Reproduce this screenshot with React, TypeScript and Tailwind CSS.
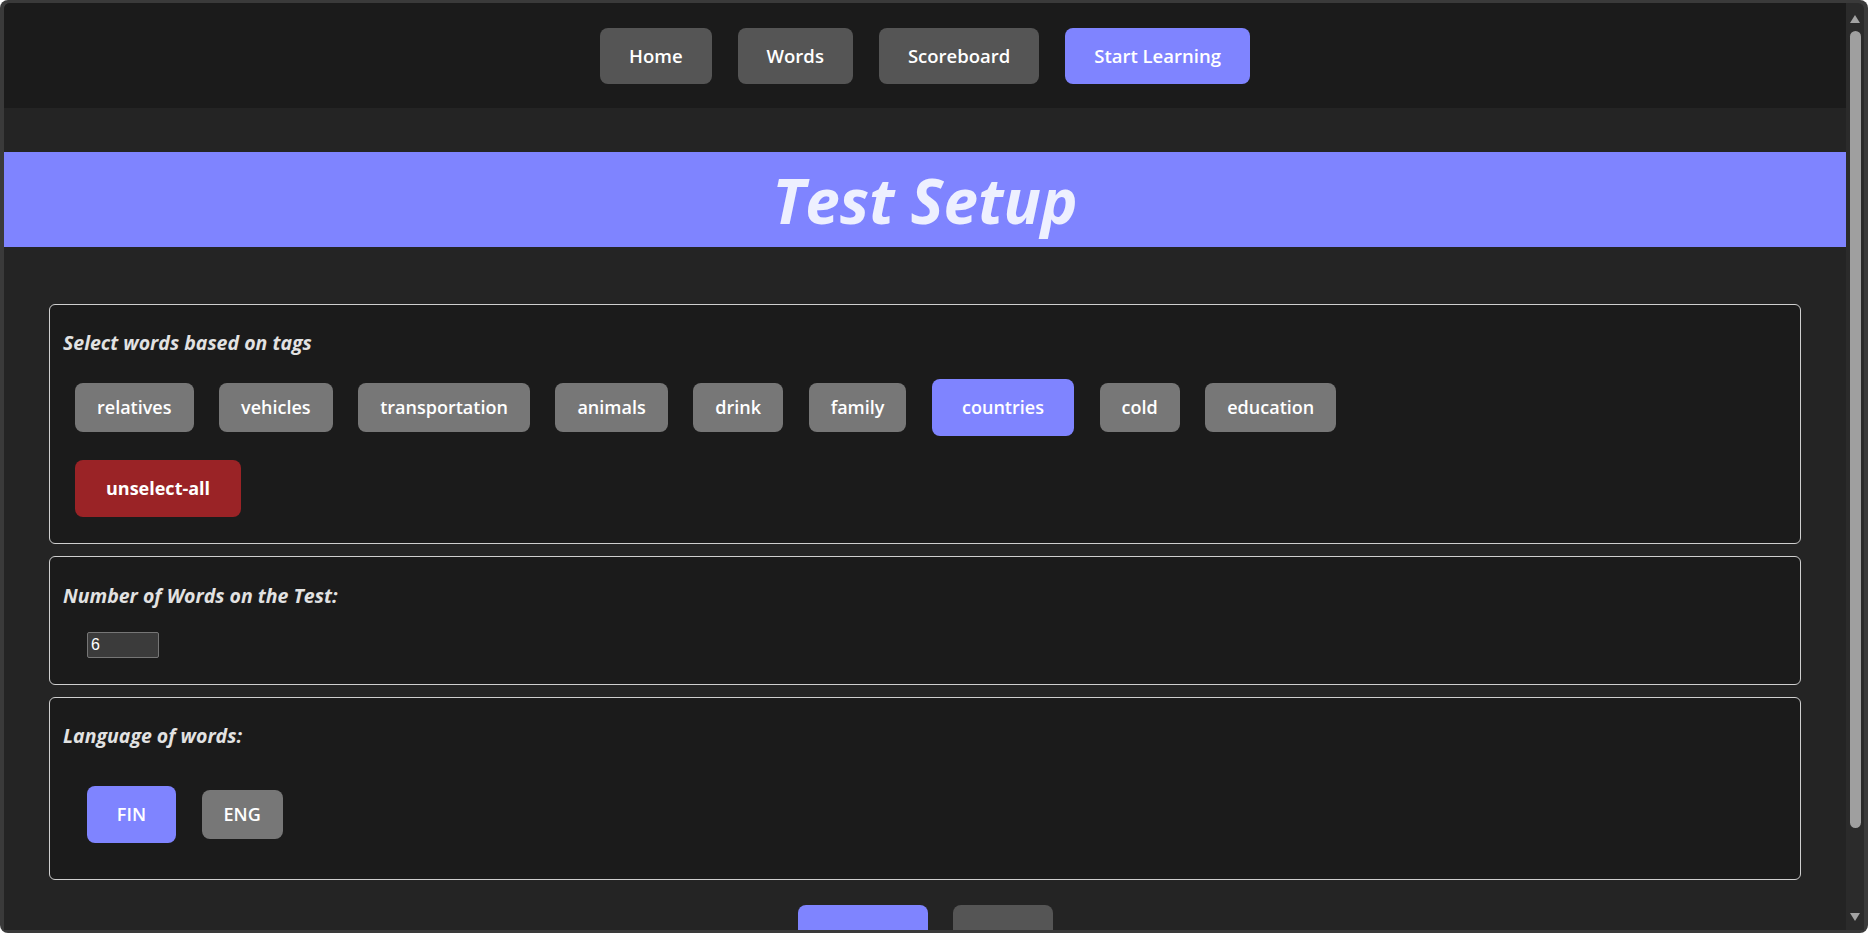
import React from 'react';

const font = "font-['Open_Sans',sans-serif]";

const navItems = [
  { label: 'Home' },
  { label: 'Words' },
  { label: 'Scoreboard' },
  { label: 'Start Learning', active: true },
];

const tags = [
  { name: 'relatives' },
  { name: 'vehicles' },
  { name: 'transportation' },
  { name: 'animals' },
  { name: 'drink' },
  { name: 'family' },
  { name: 'countries', selected: true },
  { name: 'cold' },
  { name: 'education' },
];

const TagButton: React.FC<any> = ({ label, selected, danger }) => (
  <button
    className={
      danger
        ? 'mx-[12.8px] my-3 h-[57px] px-[31px] rounded-lg text-[18px] font-bold text-white bg-[#9a2326]'
        : selected
          ? 'mx-[12.8px] my-3 h-[57px] px-[30px] rounded-lg text-[18px] font-semibold text-white bg-[#7f84ff]'
          : 'mx-[12.8px] my-3 h-[49px] px-[22px] rounded-lg text-[18px] font-semibold text-white bg-[#777777]'
    }
  >
    {label}
  </button>
);

const Label: React.FC<any> = ({ children }) => (
  <p className="text-[19.5px] leading-[24px] font-bold italic text-[#e2e2e2]">{children}</p>
);

export default function App() {
  return (
    <div className={`h-[933px] w-[1868px] bg-[#3a3a3a] rounded-[8px] pl-[4px] pr-[4px] pt-[3px] pb-[3px] overflow-hidden ${font}`}>
      <div className="flex h-full rounded-t-[6px] overflow-hidden">
        <main className="flex-1 h-full overflow-hidden bg-[#242424]">
          <nav className="h-[105px] bg-[#1b1b1b] flex items-center justify-center gap-[26px]">
            {navItems.map((n) => (
              <button
                key={n.label}
                className={`h-[56px] px-[29px] rounded-lg text-[18.5px] font-semibold text-white ${n.active ? 'bg-[#7f84ff]' : 'bg-[#555555]'}`}
              >
                {n.label}
              </button>
            ))}
          </nav>

          <header className="mt-[44px] h-[95px] bg-[#7f84ff] flex items-center justify-center">
            <h1 className="text-[62px] leading-none font-bold italic text-[#eef0ff]">Test Setup</h1>
          </header>

          <div className="mx-[45px] mt-[57px] flex flex-col gap-[12px]">
            <section className="border border-[#cfcfcf] rounded-md bg-[#1b1b1b] pl-[13px] pr-[13px] pt-[26px] pb-[14px]">
              <Label>Select words based on tags</Label>
              <div className="mt-[12px] -ml-[0.8px] flex flex-wrap items-center">
                {tags.map((t) => (
                  <TagButton key={t.name} label={t.name} selected={t.selected} />
                ))}
              </div>
              <div className="-ml-[0.8px] flex">
                <TagButton label="unselect-all" danger />
              </div>
            </section>

            <section className="border border-[#cfcfcf] rounded-md bg-[#1b1b1b] px-[13px] pt-[27px] pb-[26px]">
              <Label>Number of Words on the Test:</Label>
              <div className="mt-[24px] ml-[24px] flex">
                <input
                  type="number"
                  defaultValue={6}
                  className="block w-[72px] h-[26px] bg-[#3b3b3b] border border-[#767676] rounded-[2px] px-[3px] text-[16px] text-white font-['Liberation_Sans',Arial,sans-serif] [appearance:textfield]"
                />
              </div>
            </section>

            <section className="border border-[#cfcfcf] rounded-md bg-[#1b1b1b] px-[13px] pt-[26px] pb-[24px]">
              <Label>Language of words:</Label>
              <div className="mt-[26px] pl-[11px] flex items-center">
                <TagButton label="FIN" selected />
                <TagButton label="ENG" />
              </div>
            </section>
          </div>

          <div className="mt-[25px] flex justify-center items-start gap-[25px]">
            <button className="w-[130px] h-[57px] rounded-lg bg-[#7f84ff]" aria-label="start" />
            <button className="w-[100px] h-[57px] rounded-lg bg-[#555555]" aria-label="back" />
          </div>
        </main>

        <aside className="w-[18px] h-full bg-[#2b2b2b] flex flex-col items-center">
          <svg width="10" height="8" viewBox="0 0 10 8" className="mt-[12px]">
            <polygon points="5,0 10,8 0,8" fill="#a3a3a3" />
          </svg>
          <div className="mt-[8px] w-[11px] h-[797px] rounded-full bg-[#9f9f9f]" />
          <div className="flex-1" />
          <svg width="10" height="8" viewBox="0 0 10 8" className="mb-[9px]">
            <polygon points="0,0 10,0 5,8" fill="#a3a3a3" />
          </svg>
        </aside>
      </div>
    </div>
  );
}
